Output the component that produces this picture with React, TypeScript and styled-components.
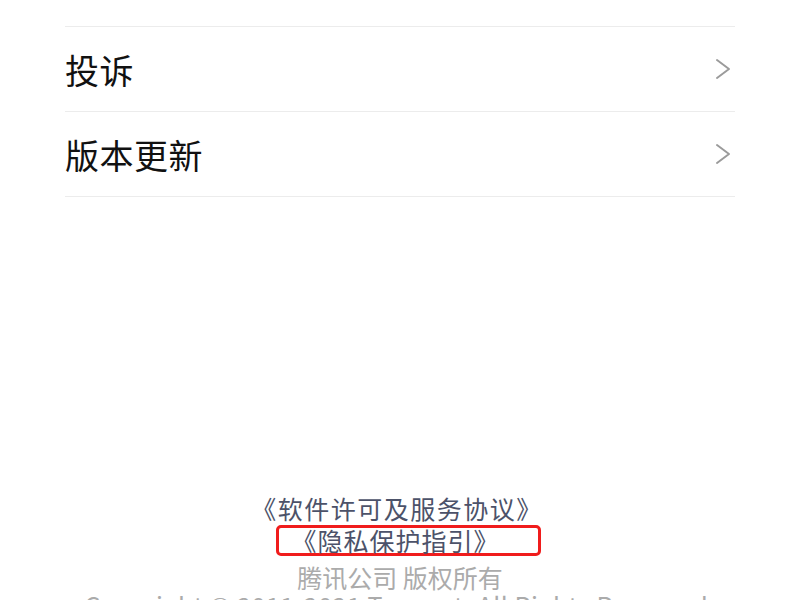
import React from "react";
import styled, { createGlobalStyle } from "styled-components";

const GlobalStyle = createGlobalStyle`
  html, body {
    margin: 0;
    padding: 0;
    background: #ffffff;
  }
  body {
    font-family: "Noto Sans CJK SC", "Noto Sans", sans-serif;
  }
`;

const Page = styled.div`
  display: flex;
  flex-direction: column;
  height: 600px;
  overflow: hidden;
  background: #ffffff;
`;

const List = styled.ul`
  list-style: none;
  margin: 0;
  padding: 26px 65px 0;
`;

const Row = styled.li`
  display: flex;
  align-items: center;
  justify-content: space-between;
  height: 84px;
  border-top: 1px solid #ececec;

  &:last-child {
    border-bottom: 1px solid #ececec;
  }
`;

const Label = styled.span`
  font-size: 34px;
  color: #111111;
  letter-spacing: 0.5px;
`;

const Chevron = styled.svg`
  width: 16px;
  height: 22px;
  margin-right: 4px;
`;

const Footer = styled.div`
  margin-top: auto;
  display: flex;
  flex-direction: column;
  align-items: center;
`;

interface FooterLineProps {
  muted?: boolean;
  spacing?: number;
}

const FooterLine = styled.div<FooterLineProps>`
  font-size: 25px;
  line-height: 29px;
  letter-spacing: ${({ spacing }) => spacing ?? 0}px;
  color: ${({ muted }) => (muted ? "#ababab" : "#4c5269")};
  white-space: nowrap;
`;

const LinkLine = styled(FooterLine)`
  margin-right: 6px;
  margin-bottom: 2px;
`;

const CopyrightLine = styled(FooterLine)`
  margin-top: -1px;
  margin-bottom: -20px;
`;

const Highlight = styled.div`
  border: 3px solid #f01c1c;
  border-radius: 5px;
  height: 25px;
  line-height: 25px;
  padding: 0 38px 0 12px;
  margin-left: 17px;
  margin-bottom: 7px;
  font-size: 25px;
  letter-spacing: 1px;
  color: #4c5269;
  white-space: nowrap;
`;

const ArrowIcon = () => (
  <Chevron viewBox="0 0 16 22">
    <polyline
      points="2,2 14,11 2,20"
      fill="none"
      stroke="#9b9b9b"
      strokeWidth="2"
      strokeLinecap="round"
      strokeLinejoin="round"
    />
  </Chevron>
);

const items = ["投诉", "版本更新"];

const App: React.FC = () => {
  return (
    <Page>
      <GlobalStyle />
      <List>
        {items.map((item) => (
          <Row key={item}>
            <Label>{item}</Label>
            <ArrowIcon />
          </Row>
        ))}
      </List>
      <Footer>
        <LinkLine spacing={1.5}>《软件许可及服务协议》</LinkLine>
        <Highlight>《隐私保护指引》</Highlight>
        <FooterLine muted>腾讯公司 版权所有</FooterLine>
        <CopyrightLine muted spacing={0.5}>
          Copyright © 2011-2021 Tencent. All Rights Reserved.
        </CopyrightLine>
      </Footer>
    </Page>
  );
};

export default App;
